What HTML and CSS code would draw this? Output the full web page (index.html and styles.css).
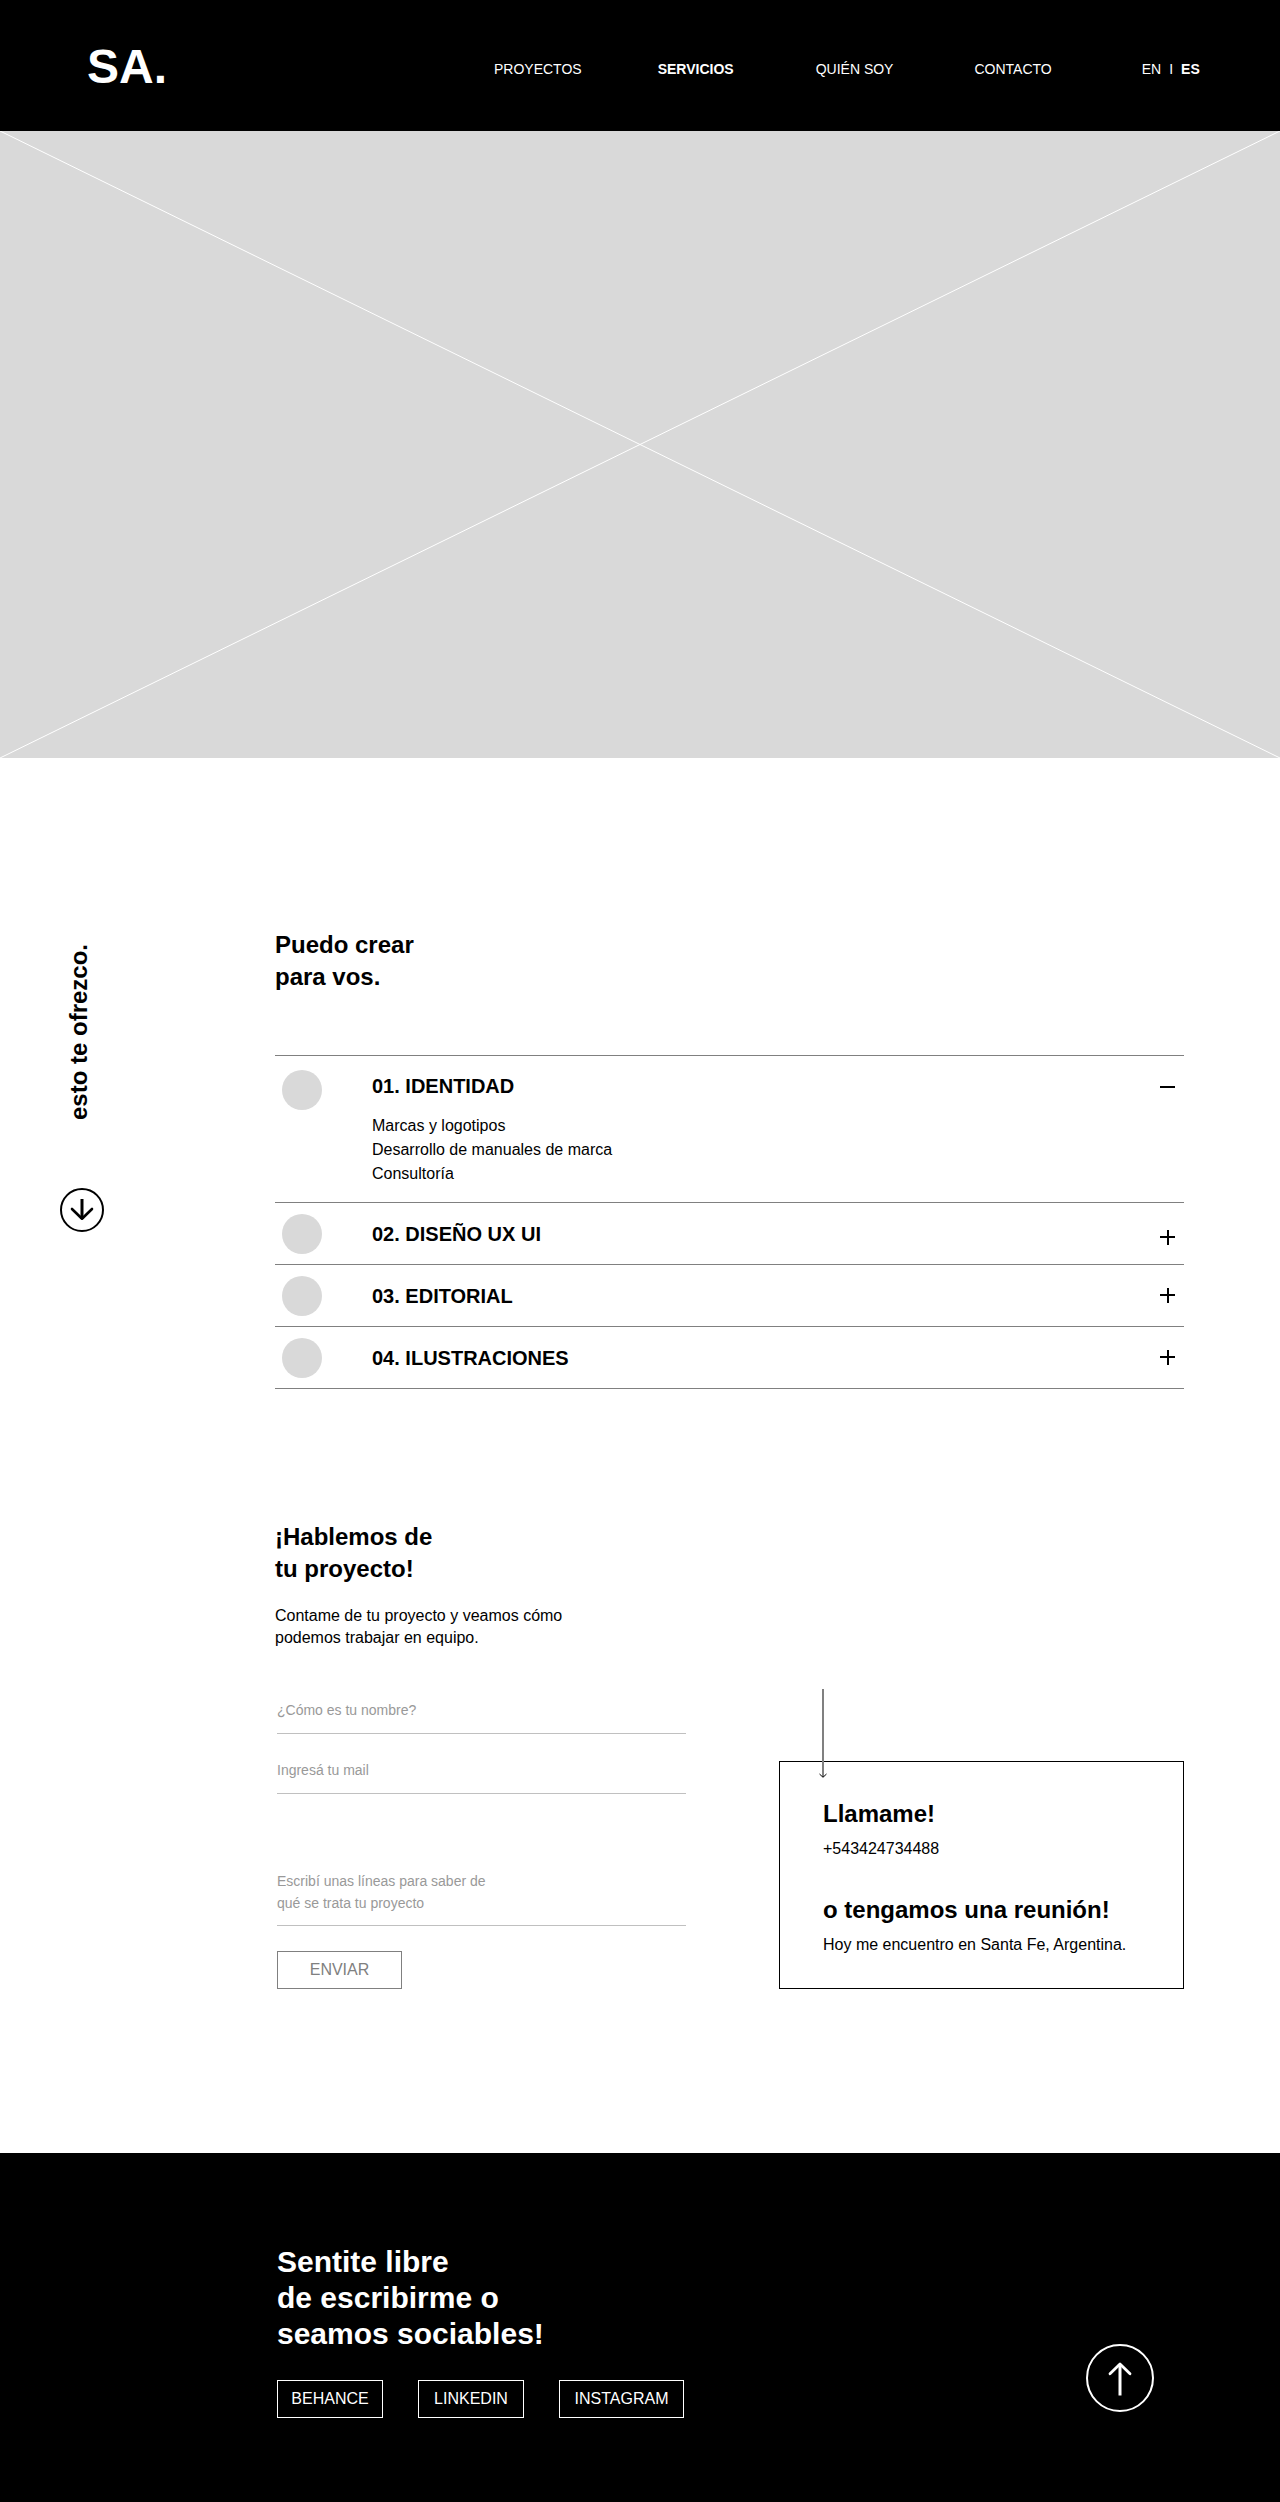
FILE: index.html
```
<!DOCTYPE html>
<html lang="es">
<head>
<meta charset="utf-8">
<title>SA. Servicios</title>
<link rel="stylesheet" href="styles.css">
</head>
<body>
<header class="header">
  <a class="logo">SA.</a>
  <nav class="nav">
    <a class="nav-item">PROYECTOS</a>
    <a class="nav-item active">SERVICIOS</a>
    <a class="nav-item about">QUIÉN SOY</a>
    <a class="nav-item">CONTACTO</a>
  </nav>
  <div class="lang"><a>EN</a><span>I</span><a class="active">ES</a></div>
</header>

<svg class="hero" viewBox="0 0 1280 627" width="1280" height="627">
  <path d="M0 0L1280 627M1280 0L0 627" stroke="#fff" fill="none"/>
</svg>

<main class="main">
  <aside class="aside">
    <p class="aside-text">esto te ofrezco.</p>
    <svg class="aside-arrow" width="44" height="44" viewBox="0 0 44 44" fill="none" stroke="#000">
      <circle cx="22" cy="22" r="21" stroke-width="2"/>
      <path d="M22 11V31" stroke-width="3"/>
      <path d="M12 21L22 30.7L32 21" stroke-width="2.6" stroke-linecap="round" stroke-linejoin="round"/>
    </svg>
  </aside>

  <div class="content">
    <section>
      <h2 class="title">Puedo crear<br>para vos.</h2>
      <div class="services">
        <article class="service open">
          <span class="dot"></span>
          <div class="service-body">
            <h3>01. IDENTIDAD</h3>
            <ul>
              <li>Marcas y logotipos</li>
              <li>Desarrollo de manuales de marca</li>
              <li>Consultoría</li>
            </ul>
          </div>
          <svg class="toggle" width="15" height="15"><path d="M0 7H15" stroke="#000" stroke-width="2"/></svg>
        </article>
        <article class="service second">
          <span class="dot"></span>
          <div class="service-body"><h3>02. DISEÑO UX UI</h3></div>
          <svg class="toggle" width="15" height="15"><path d="M0 7H15M8 0V15" stroke="#000" stroke-width="2"/></svg>
        </article>
        <article class="service">
          <span class="dot"></span>
          <div class="service-body"><h3>03. EDITORIAL</h3></div>
          <svg class="toggle" width="15" height="15"><path d="M0 7H15M8 0V15" stroke="#000" stroke-width="2"/></svg>
        </article>
        <article class="service">
          <span class="dot"></span>
          <div class="service-body"><h3>04. ILUSTRACIONES</h3></div>
          <svg class="toggle" width="15" height="15"><path d="M0 7H15M8 0V15" stroke="#000" stroke-width="2"/></svg>
        </article>
      </div>
    </section>

    <section class="contact">
      <div>
        <h2 class="title">¡Hablemos de<br>tu proyecto!</h2>
        <p class="intro">Contame de tu proyecto y veamos cómo<br>podemos trabajar en equipo.</p>
        <form class="form">
          <label class="field">¿Cómo es tu nombre?</label>
          <label class="field mail">Ingresá tu mail</label>
          <label class="field message">Escribí unas líneas para saber de<br>qué se trata tu proyecto</label>
          <button class="button send" type="button">ENVIAR</button>
        </form>
      </div>
      <div class="card">
        <svg class="card-arrow" width="8" height="89" viewBox="0 0 8 89" fill="none">
          <path d="M4 0V88" stroke="#808080" stroke-width="2"/>
          <path d="M.5 85L4 88.3L7.5 85" stroke="#000"/>
        </svg>
        <h2 class="title">Llamame!</h2>
        <p>+543424734488</p>
        <h2 class="title">o tengamos una reunión!</h2>
        <p>Hoy me encuentro en Santa Fe, Argentina.</p>
      </div>
    </section>
  </div>
</main>

<footer class="footer">
  <div>
    <h2 class="footer-title">Sentite libre<br>de escribirme o<br>seamos sociables!</h2>
    <div class="socials">
      <a class="button">BEHANCE</a>
      <a class="button">LINKEDIN</a>
      <a class="button wide">INSTAGRAM</a>
    </div>
  </div>
  <svg class="up" width="68" height="68" viewBox="0 0 68 68" fill="none" stroke="#fff">
    <circle cx="34" cy="34" r="33" stroke-width="2"/>
    <path d="M34 20V51.5" stroke-width="3"/>
    <path d="M24 29.7L34 20L44 29.7" stroke-width="2.8" stroke-linecap="round" stroke-linejoin="round"/>
  </svg>
</footer>
</body>
</html>
```
FILE: styles.css
```
* { box-sizing: border-box; margin: 0; padding: 0; }
body {
  width: 1280px;
  background: #fff;
  color: #000;
  font: 16px/24px "Liberation Sans", Helvetica, Arial, sans-serif;
}
ul { list-style: none; }

.header {
  display: flex;
  align-items: flex-start;
  height: 131px;
  padding-left: 87px;
  background: #000;
  color: #fff;
}
.logo { width: 407px; padding-top: 39px; font-size: 48px; line-height: 56px; font-weight: 700; }
.nav { display: flex; gap: 76px; padding-top: 58px; font-size: 14px; line-height: 22px; }
.about { margin: 0 5px 0 6px; }
.lang { display: flex; gap: 8px; margin-left: 90px; padding-top: 58px; font-size: 14px; line-height: 22px; }
.active { font-weight: 700; }

.hero { display: block; background: #d9d9d9; }

.main { display: flex; height: 1395px; padding-top: 171px; }
.aside { width: 275px; padding: 13px 0 0 60px; }
.aside-text {
  width: 38px;
  height: 178px;
  line-height: 38px;
  font-size: 24px;
  font-weight: 700;
  white-space: nowrap;
  writing-mode: vertical-rl;
  transform: rotate(180deg);
}
.aside-arrow { display: block; margin-top: 68px; }

.content { width: 909px; }
.title { font-size: 24px; line-height: 32px; font-weight: 700; }

.services { margin-top: 62px; border-top: 1px solid #808080; }
.service {
  display: flex;
  align-items: flex-start;
  height: 62px;
  padding: 11px 9px 0 7px;
  border-bottom: 1px solid #808080;
}
.dot { width: 40px; height: 40px; border-radius: 50%; background: #d9d9d9; }
.service-body { flex: 1; padding: 8px 0 0 50px; }
.service h3 { font-size: 20px; line-height: 24px; }
.toggle { margin-top: 13px; }
.second .toggle { margin-top: 16px; }
.open { height: 147px; padding-top: 14px; }
.open .service-body { padding-top: 4px; }
.open ul { margin-top: 16px; }
.open .toggle { margin-top: 10px; }
.service:nth-child(n+3) .toggle { margin-top: 12px; }

.contact { display: flex; justify-content: space-between; margin-top: 132px; }
.intro { margin-top: 20px; line-height: 22px; }
.form { display: flex; flex-direction: column; width: 409px; margin: 46px 0 0 2px; }
.field {
  height: 39px;
  padding-top: 4px;
  font-size: 14px;
  line-height: 22px;
  color: #999;
  border-bottom: 1px solid #c0c0c0;
}
.mail { height: 40px; margin-top: 20px; padding-top: 5px; }
.message { height: 56px; margin-top: 76px; padding-top: 0; }
.button {
  display: block;
  width: 106px;
  height: 38px;
  border: 1px solid #fff;
  font: inherit;
  line-height: 36px;
  text-align: center;
}
.send { width: 125px; margin-top: 25px; border-color: #808080; background: none; color: #808080; }

.card {
  position: relative;
  width: 405px;
  height: 228px;
  margin-top: 240px;
  padding: 36px 0 0 43px;
  border: 1px solid #000;
}
.card-arrow { position: absolute; left: 39px; top: -73px; }
.card p { margin-top: 7px; }
.card p + .title { margin-top: 33px; }

.footer {
  display: flex;
  justify-content: space-between;
  height: 349px;
  padding: 91px 126px 0 277px;
  background: #000;
  color: #fff;
}
.footer-title { font-size: 30px; line-height: 36px; }
.socials { display: flex; gap: 35px; margin-top: 28px; }
.wide { width: 125px; }
.up { margin-top: 100px; }
```
